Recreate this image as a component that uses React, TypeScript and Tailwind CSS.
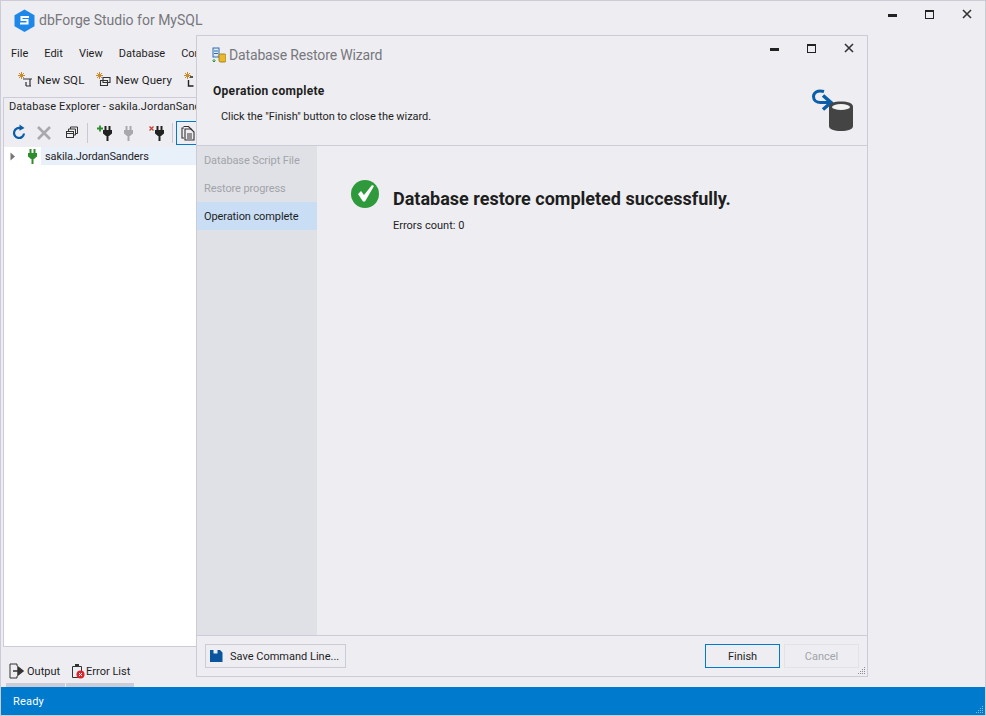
const font = { fontFamily: 'Roboto, sans-serif' };

function Star({ x = 0, y = 0 }: { x?: number; y?: number }) {
  return (
    <path
      transform={`translate(${x} ${y})`}
      d="M3.500 0v7M0 3.500h7M1 1l5 5M6 1L1 6"
      stroke="#c98a2b"
      strokeWidth="1"
      fill="none"
    />
  );
}

function Plug({ color = "#222", x = 0, y = 0 }: { color?: string; x?: number; y?: number }) {
  return (
    <g transform={`translate(${x} ${y})`} fill={color}>
      <rect x="1.500" y="0" width="2" height="4" />
      <rect x="5.500" y="0" width="2" height="4" />
      <path d="M0 4h9v3.500L6 10H5.500v5h-2v-5H3L0 7.500z" />
    </g>
  );
}

function WindowButtons() {
  return (
    <div className="flex items-center">
      <div className="w-[37px] flex justify-center">
        <div className="w-[9px] h-[3px] mt-[3px] bg-[#222]" />
      </div>
      <div className="w-[37px] flex justify-center">
        <div className="w-[9px] h-[9px] border border-[#222] border-t-2" />
      </div>
      <svg width="37" height="10" viewBox="0 0 37 10">
        <path d="M15 1l8 8M23 1l-8 8" stroke="#333" strokeWidth="1.600" />
      </svg>
    </div>
  );
}

function Toolbar() {
  return (
    <div className="h-[25px] flex items-center ml-[3px] text-[11.5px] tracking-[0.1px] text-[#1e1e1e] shrink-0">
      <div className="w-[5px] h-[16px] bg-[radial-gradient(#aaa_0.5px,transparent_0.6px)] bg-[length:2px_2px]" />
      <svg className="ml-[9px]" width="16" height="16" viewBox="0 0 16 16">
        <Star />
        <path d="M5 7h9M12 7v7M8 14h5M8 10v4" stroke="#333" strokeWidth="1.200" fill="none" />
      </svg>
      <span className="ml-[3px] mt-[2px]">New SQL</span>
      <svg className="ml-[12px]" width="16" height="16" viewBox="0 0 16 16">
        <Star />
        <path d="M7 5.500h7v5H7zM4.500 8.500h7v5h-7z" stroke="#333" strokeWidth="1.100" fill="#eeeef2" />
      </svg>
      <span className="ml-[3px] mt-[2px]">New Query</span>
      <svg className="ml-[12px]" width="16" height="16" viewBox="0 0 16 16">
        <Star />
        <path d="M6 5h3M4.500 8v6h5" stroke="#222" strokeWidth="1.400" fill="none" />
      </svg>
    </div>
  );
}

function ExplorerTools() {
  return (
    <div className="h-[33px] pt-[5px] flex items-center pl-[6px]">
      <svg width="18" height="18" viewBox="0 0 18 18">
        <path d="M14 9.500a5 5 0 1 1-3.200-5.200" stroke="#0a5ea8" strokeWidth="2.200" fill="none" />
        <path d="M9.500 0.500l5 3.400-5 2.800z" fill="#0a5ea8" />
      </svg>
      <svg className="ml-[8px]" width="16" height="16" viewBox="0 0 16 16">
        <path d="M2 2l12 12M14 2L2 14" stroke="#a9a9ad" strokeWidth="2.600" />
      </svg>
      <svg className="ml-[13px]" width="14" height="14" viewBox="0 0 14 14">
        <path d="M5.500 3V1h7v6.500h-2M3.500 5V3h7v6h-2" stroke="#333" strokeWidth="1" fill="none" />
        <rect x="1.500" y="5.500" width="7" height="6" stroke="#333" fill="#eeeef2" />
        <path d="M2 7.500h6" stroke="#333" />
      </svg>
      <div className="ml-[8px] w-px h-[20px] bg-[#c8c9d4]" />
      <svg className="ml-[9px]" width="16" height="16" viewBox="0 0 16 16">
        <path d="M0 3.500h6M3 0.500v6" stroke="#2e8b2e" strokeWidth="1.800" />
        <Plug x={6} y={1} />
      </svg>
      <svg className="ml-[10px]" width="12" height="16" viewBox="0 0 12 16">
        <Plug color="#a9a9ad" x={1} y={1} />
      </svg>
      <svg className="ml-[14px]" width="16" height="16" viewBox="0 0 16 16">
        <path d="M0.500 1.500l4 4M4.500 1.500l-4 4" stroke="#c8402f" strokeWidth="1.300" />
        <Plug x={6} y={1} />
      </svg>
      <div className="ml-[7px] w-px h-[20px] bg-[#c8c9d4]" />
      <div className="ml-[3px] w-[24px] h-[24px] border border-[#0079ce] flex items-center justify-center shrink-0">
        <svg width="14" height="16" viewBox="0 0 14 16">
          <path d="M3 3H1v10h2M2.500 1.500h5L11 5" stroke="#333" strokeWidth="1.100" fill="none" />
          <path d="M4 4h6l3 3v8H4z" stroke="#333" strokeWidth="1.100" fill="none" />
          <path d="M6 9h5M6 11h5M6 13h5" stroke="#333" />
        </svg>
      </div>
    </div>
  );
}

function Explorer() {
  return (
    <div className="w-[230px] h-[550px] mt-[5px] ml-[2px] border border-[#ccccd9] flex flex-col overflow-hidden shrink-0">
      <div className="h-[16px] pt-[2px] pl-[5px] flex items-center text-[11px] tracking-[0.1px] text-[#1e1e1e] whitespace-nowrap">
        Database Explorer - sakila.JordanSanders
      </div>
      <ExplorerTools />
      <div className="flex-1 bg-white">
        <div className="h-[18px] flex items-center">
          <svg className="ml-[6px]" width="6" height="9" viewBox="0 0 6 9">
            <path d="M0.500 0.500l4.500 4-4.500 4z" fill="#777" />
          </svg>
          <svg className="ml-[11px]" width="12" height="15" viewBox="0 0 12 15">
            <Plug color="#2e8b2e" x={1} y={0} />
          </svg>
          <div className="ml-[2px] pl-[4px] pt-[2px] flex-1 h-full flex items-center bg-[#e8f0fa] text-[11px] tracking-[-0.1px] text-[#1e1e1e]">
            sakila.JordanSanders
          </div>
        </div>
      </div>
    </div>
  );
}

function WizardNav() {
  return (
    <div className="w-[120px] bg-[#e0e1e6] text-[11px] tracking-[-0.1px] whitespace-nowrap shrink-0">
      <div className="h-[28px] pl-[7px] pt-[2px] flex items-center text-[#a2a4a9]">Database Script File</div>
      <div className="h-[28px] pl-[7px] pt-[2px] flex items-center text-[#a2a4a9]">Restore progress</div>
      <div className="h-[28px] pl-[7px] pt-[2px] flex items-center bg-[#c9def5] text-[#1e1e1e]">Operation complete</div>
    </div>
  );
}

function Wizard() {
  return (
    <div className="absolute left-[195px] top-[34px] w-[672px] h-[642px] bg-[#eeeef2] border border-[#ccccd9] flex flex-col">
      <div className="h-[110px] border-b border-[#ccccd9] relative shrink-0">
        <div className="flex items-center pl-[15px] pt-[9px]">
          <svg width="14" height="16" viewBox="0 0 14 16">
            <rect x="1" y="1" width="6" height="9" fill="#dfe8f3" stroke="#2f6fb0" />
            <path d="M2 4h4M2 6.500h4" stroke="#2f6fb0" />
            <path d="M2 12v3M0.500 13.500L2 15l1.500-1.500" stroke="#2e8b2e" fill="none" />
            <rect x="7" y="7" width="7" height="8" rx="1.500" fill="#e8b92c" stroke="#a8811a" />
          </svg>
          <span className="ml-[3px] text-[14px] leading-[20px] tracking-[-0.15px] text-[#77777c]">
            Database Restore Wizard
          </span>
        </div>
        <div className="absolute right-[0px] top-[7px]">
          <WindowButtons />
        </div>
        <div className="mt-[18px] pl-[16px] text-[12px] leading-[16px] tracking-[0.3px] font-bold text-[#1e1e1e]">
          Operation complete
        </div>
        <div className="mt-[10px] pl-[24px] text-[11px] tracking-[-0.05px] leading-[16px] text-[#1e1e1e]">
          Click the "Finish" button to close the wizard.
        </div>
        <svg className="absolute left-[613px] top-[51px]" width="46" height="46" viewBox="0 0 46 46">
          <path d="M14 4.500C7 2.500 3.500 6 3.500 9.500c0 3.500 3 6 7 6h9" stroke="#0a5ea8" strokeWidth="3" fill="none" />
          <path d="M13 8.500l8 7-8 7" stroke="#0a5ea8" strokeWidth="3.500" fill="none" />
          <path d="M19 20c0-4 5-5.500 12-5.500s12 1.500 12 5.500v19c0 3.500-5 5-12 5s-12-1.500-12-5z" fill="#444" />
          <ellipse cx="31" cy="20" rx="9" ry="3" fill="#f2f2f4" />
        </svg>
      </div>
      <div className="flex-1 flex min-h-0">
        <WizardNav />
        <div className="flex-1 pl-[34px] pt-[34px]">
          <div className="flex items-start">
            <svg width="28" height="28" viewBox="0 0 28 28">
              <circle cx="14" cy="14" r="14" fill="#2f9a3c" />
              <path d="M7 14l3-3 3 4 8-10 2 1-9 15.500h-2z" fill="#fff" />
            </svg>
            <span className="ml-[14px] mt-[7px] text-[18px] leading-[24px] font-bold text-[#1e1e1e]">
              Database restore completed successfully.
            </span>
          </div>
          <div className="mt-[7px] ml-[42px] text-[11px] leading-[16px] text-[#1e1e1e]">Errors count: 0</div>
        </div>
      </div>
      <div className="h-[41px] border-t border-[#ccccd9] shrink-0 relative flex items-center pl-[8px] pr-[8px] text-[11px] whitespace-nowrap">
        <button className="w-[141px] h-[24px] border border-[#ccccd9] flex items-center pl-[4px] text-[#1e1e1e]">
          <svg width="13" height="12" viewBox="0 0 13 12">
            <path d="M0 0h3.500v3.500h4V0H10l2.500 2.500V12H0z" fill="#0a559e" />
          </svg>
          <span className="ml-[7px] mt-[2px]">Save Command Line...</span>
        </button>
        <button className="ml-auto w-[75px] h-[24px] pt-[2px] border border-[#0079ce] text-[#1e1e1e]">Finish</button>
        <button className="ml-[4px] w-[75px] h-[24px] pt-[2px] border border-[#e2e2e7] text-[#a2a4a9]">Cancel</button>
        <Grip className="absolute right-[1px] bottom-[1px]" />
      </div>
    </div>
  );
}

function Grip({ className, light }: { className?: string; light?: boolean }) {
  const fill = light ? "#7fbce6" : "#8a8a93";
  return (
    <svg className={className} width="8" height="8" viewBox="0 0 8 8" fill={fill}>
      <rect x="6" y="0" width="1" height="1" />
      <rect x="4" y="2" width="1" height="1" />
      <rect x="6" y="2" width="1" height="1" />
      <rect x="2" y="4" width="1" height="1" />
      <rect x="4" y="4" width="1" height="1" />
      <rect x="6" y="4" width="1" height="1" />
      <rect x="0" y="6" width="1" height="1" />
      <rect x="2" y="6" width="1" height="1" />
      <rect x="4" y="6" width="1" height="1" />
      <rect x="6" y="6" width="1" height="1" />
    </svg>
  );
}

export default function App() {
  return (
    <div
      className="relative w-[986px] h-[716px] bg-[#eeeef2] border border-[#ccccd9] flex flex-col overflow-hidden"
      style={font}
    >
      <div className="h-[38px] pt-[1px] flex items-center shrink-0 relative">
        <svg className="ml-[13px]" width="21" height="23" viewBox="0 0 21 23">
          <path d="M10.500 0.500l10 5.700v11l-10 5.700-10-5.700v-11z" fill="#1e88ea" />
          <path d="M15 8H7.500v3h6v3.500H6" stroke="#fff" strokeWidth="2" fill="none" />
        </svg>
        <span className="ml-[4px] text-[14px] text-[#77777c]">dbForge Studio for MySQL</span>
        <div className="absolute right-[0px] top-[8px]">
          <WindowButtons />
        </div>
      </div>
      <div className="h-[28px] pt-[2px] flex items-center pl-[10px] gap-[16px] text-[11px] text-[#1e1e1e] shrink-0">
        <span>File</span>
        <span>Edit</span>
        <span>View</span>
        <span>Database</span>
        <span>Connection</span>
      </div>
      <Toolbar />
      <Explorer />
      <div className="h-[40px] relative shrink-0 text-[11px] text-[#1e1e1e]">
        <div className="flex items-center pl-[8px] pt-[15px]">
          <svg width="17" height="16" viewBox="0 0 17 16">
            <path d="M8 3V1H1v14h7v-2" stroke="#333" fill="none" />
            <path d="M4 8h8M9 4l5 4-5 4z" stroke="#333" strokeWidth="1.500" fill="#333" />
          </svg>
          <span className="ml-[1px] mt-[2px]">Output</span>
          <svg className="ml-[11px]" width="14" height="16" viewBox="0 0 14 16">
            <path d="M1.500 3.500h9v11h-9z" stroke="#333" fill="none" />
            <rect x="4" y="1" width="4" height="3" fill="#333" />
            <circle cx="9.500" cy="11.500" r="4" fill="#d9262c" />
            <path d="M8 10l3 3M11 10l-3 3" stroke="#fff" />
          </svg>
          <span className="ml-[1px] mt-[2px]">Error List</span>
        </div>
        <div className="absolute left-[5px] bottom-0 flex gap-[1px]">
          <div className="w-[59px] h-[4px] bg-[#ccccd9]" />
          <div className="w-[68px] h-[4px] bg-[#ccccd9]" />
        </div>
      </div>
      <div className="h-[28px] pt-[2px] bg-[#007acc] text-white text-[11px] tracking-[0.2px] flex items-center pl-[12px] shrink-0 relative">
        Ready
        <Grip light className="absolute right-[1px] bottom-[1px]" />
      </div>
      <Wizard />
    </div>
  );
}
